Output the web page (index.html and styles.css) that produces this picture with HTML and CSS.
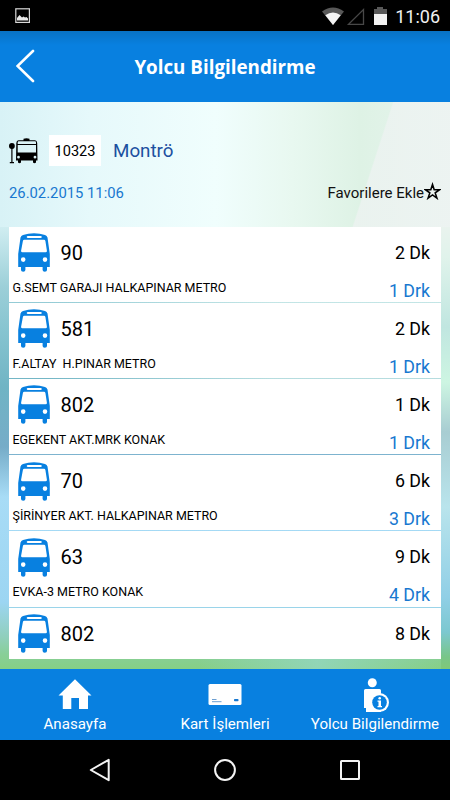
FILE: index.html
```
<!DOCTYPE html>
<html lang="tr">
<head>
<meta charset="utf-8">
<title>Yolcu Bilgilendirme</title>
<link rel="stylesheet" href="styles.css">
</head>
<body>
<svg class="defs" width="0" height="0">
  <symbol id="bus" viewBox="0 0 32 39">
    <path fill="#0880e0" fill-rule="evenodd" d="M2.500 4.500Q3 2.800 5 2Q10 .2 16 .2T27 2Q29 2.800 29.500 4.500L31.800 21V34H29V37Q29 38.800 26.800 38.800T24.600 37V34H7.400V37Q7.400 38.800 5.200 38.800T3 37V34H.2V21ZM10 2.900Q8.700 2.900 8.700 4T10 5.100H22.500Q23.800 5.100 23.800 4T22.500 2.900ZM6.300 6.700Q5.100 6.700 4.900 8L3.100 17.700Q2.900 19.200 4.400 19.200H27.600Q29.100 19.200 28.900 17.700L27.400 8Q27.200 6.700 26 6.700ZM5.200 24.300A2.300 2.300 0 1 0 5.200 28.900A2.300 2.300 0 1 0 5.200 24.300ZM27 24.300A2.300 2.300 0 1 0 27 28.900A2.300 2.300 0 1 0 27 24.300Z"/>
  </symbol>
</svg>
<div class="screen">
  <div class="status">
    <svg class="picture" width="16" height="16" viewBox="0 0 16 16"><rect x=".8" y=".8" width="13.600" height="13.600" fill="none" stroke="#d8d8d8" stroke-width="1.200"/><path d="M2 12.500V10L4.500 7L7 9.500L8.500 8.500L10 9.500L11.500 9L13 10.500V12.500Z" fill="#e8e8e8"/></svg>
    <svg class="signals" width="66" height="19" viewBox="0 0 66 19"><path d="M0 4.500Q11 -3.500 22 4.500L11 18Z" fill="#585858"/><path d="M3.300 8.300Q11 2.500 18.700 8.300L11 18Z" fill="#f4f4f4"/><path d="M26.500 17.300H41.500V2.500Z" fill="none" stroke="#484848" stroke-width="1.300"/><path d="M52 2H55V0H61V2H65V18H52Z" fill="#585858"/><path d="M52 7H65V18H52Z" fill="#f2f2f2"/></svg>
    <span class="clock">11:06</span>
  </div>
  <header class="header">
    <svg class="back" width="20" height="34" viewBox="0 0 20 34"><path d="M17 2L1.500 17L17 32" fill="none" stroke="#fff" stroke-width="2.600" stroke-linecap="round"/></svg>
    <h1>Yolcu Bilgilendirme</h1>
  </header>
  <main class="main">
    <div class="stop">
      <svg class="stop-icon" width="29" height="27" viewBox="0 0 29 27"><circle cx="2.900" cy="8" r="2.900"/><path d="M2.300 10H3.500V24H5V25.300H.8V24H2.300Z"/><path fill-rule="evenodd" d="M9.500 2.300H14.500V.8Q17.500 -.1 20.500 .8V2.300H26Q28 2.300 28.200 5L28.500 22.500H27V24.500Q25.500 26 24 24.500V22.500H12V24.500Q10.500 26 9 24.500V22.500H7L7.300 5Q7.500 2.300 9.500 2.300ZM9.700 3.300Q8.700 3.300 8.700 4.500V6H27V4.500Q27 3.300 26 3.300ZM8.700 7V14.500H27V7ZM9.500 17.800A1.400 1.400 0 1 0 9.500 20.600A1.400 1.400 0 1 0 9.500 17.800ZM26 17.800A1.400 1.400 0 1 0 26 20.600A1.400 1.400 0 1 0 26 17.800Z"/></svg>
      <span class="stop-code">10323</span>
      <span class="stop-name">Montrö</span>
    </div>
    <div class="meta">
      <span class="date">26.02.2015 11:06</span>
      <span class="favorite">Favorilere Ekle<svg width="17" height="18" viewBox="0 0 17 18"><path d="M8.500 2.500L10.200 7.700H15.600L11.200 10.900L12.900 16.100L8.500 12.900L4.100 16.100L5.800 10.900L1.400 7.700H6.800Z" fill="none" stroke="#000" stroke-width="1.600"/></svg></span>
    </div>
    <div class="list">
      <div class="row"><svg class="bus"><use href="#bus"/></svg><b class="line">90</b><span class="time">2 Dk</span><span class="route">G.SEMT GARAJI HALKAPINAR METRO</span><span class="stops">1 Drk</span></div>
      <div class="row"><svg class="bus"><use href="#bus"/></svg><b class="line">581</b><span class="time">2 Dk</span><span class="route">F.ALTAY  H.PINAR METRO</span><span class="stops">1 Drk</span></div>
      <div class="row"><svg class="bus"><use href="#bus"/></svg><b class="line">802</b><span class="time">1 Dk</span><span class="route">EGEKENT AKT.MRK KONAK</span><span class="stops">1 Drk</span></div>
      <div class="row"><svg class="bus"><use href="#bus"/></svg><b class="line">70</b><span class="time">6 Dk</span><span class="route">ŞİRİNYER AKT. HALKAPINAR METRO</span><span class="stops">3 Drk</span></div>
      <div class="row"><svg class="bus"><use href="#bus"/></svg><b class="line">63</b><span class="time">9 Dk</span><span class="route">EVKA-3 METRO KONAK</span><span class="stops">4 Drk</span></div>
      <div class="row last"><svg class="bus"><use href="#bus"/></svg><b class="line">802</b><span class="time">8 Dk</span></div>
    </div>
  </main>
  <nav class="tabs">
    <div class="tab"><svg width="34" height="36" viewBox="0 0 34 36"><path fill="#fff" d="M17 1.200L33.500 17.500H30V31H21V20H13.300V31H4.800V17.500H.5Z"/></svg><span>Anasayfa</span></div>
    <div class="tab"><svg width="34" height="36" viewBox="0 0 34 36"><rect x=".5" y="6" width="33" height="21" rx="1.500" fill="#fff"/><path d="M4 21.500H8.500M4 23.700H13.500" stroke="#5c94cc" stroke-width=".9"/><rect x="26" y="21" width="4.500" height="2.300" rx=".8" fill="#1878d0"/></svg><span>Kart İşlemleri</span></div>
    <div class="tab"><svg width="28" height="36" viewBox="0 0 28 36"><circle cx="11.300" cy="4.800" r="4.500" fill="#fff"/><path d="M4.500 11H18.500Q20 11 20 12.500V34H5V30H3V12.500Q3 11 4.500 11Z" fill="#fff"/><circle cx="18.500" cy="24.500" r="9.500" fill="#fff"/><circle cx="18.500" cy="24.500" r="7.300" fill="#0880e0"/><circle cx="18.700" cy="20.200" r="1.300" fill="#fff"/><path d="M16.500 22.500H20V28H21V29.300H16.500V28H17.500V23.700H16.500Z" fill="#fff"/></svg><span>Yolcu Bilgilendirme</span></div>
  </nav>
  <div class="system">
    <svg width="22" height="24" viewBox="0 0 22 24"><path d="M19.700 1.800V22.200L1.800 12Z" fill="none" stroke="#f4f4f4" stroke-width="2" stroke-linejoin="round"/></svg>
    <svg width="22" height="24" viewBox="0 0 22 24"><circle cx="11" cy="12" r="9.900" fill="none" stroke="#f4f4f4" stroke-width="2"/></svg>
    <svg width="22" height="24" viewBox="0 0 22 24"><rect x="2" y="3" width="18" height="18" rx=".5" fill="none" stroke="#f4f4f4" stroke-width="2"/></svg>
  </div>
</div>
</body>
</html>
```

FILE: styles.css
```
* { box-sizing: border-box; }
body { margin: 0; background: #000; font-family: Roboto, sans-serif; color: #000; }
svg { display: block; flex: none; }
.defs { position: absolute; }
.screen { width: 450px; height: 800px; display: flex; flex-direction: column; overflow: hidden; }

.status { height: 31px; display: flex; align-items: flex-start; background: #000; padding: 0 10px 0 15px; }
.picture { margin-top: 8px; }
.signals { margin: 7px 6px 0 auto; }
.clock { width: 46px; text-align: right; color: #f0f0f0; font-size: 18px; line-height: 33px; }

.header { height: 71px; display: flex; align-items: center; padding-left: 16px; background: linear-gradient(#0872c4, #0880e0 14px); }
.back { margin-bottom: 1px; }
.header h1 { flex: 1; margin: 0 36px 0 0; text-align: center; color: #fff; font: 700 18.800px/70px "Open Sans", sans-serif; }

.main {
  height: 567px;
  padding: 33px 9px 0;
  background:
    linear-gradient(108deg, transparent 80%, rgba(238, 243, 242, .75) 80.3%) 0 0 / 450px 125px no-repeat,
    linear-gradient(90deg, #d8f2f6, #e6f9fb 20%, #f0fefd 48%, #e8f8f0 65%, #def2e5 80%, #e8f4ef) 0 0 / 450px 125px no-repeat,
    linear-gradient(#e9f3ee, #e0f3eb 30px, #c0e6e0 100px, #cdf5e2 155px, #a8cdd2 205px, #b9e4ec 280px, #90cfe6 370px, #7cc8d0 405px, #78c688 430px, #80c878) 100% 125px / 9px 442px no-repeat,
    linear-gradient(90deg, transparent 45%, rgba(150, 216, 200, .7) 72%, transparent) 0 100% / 441px 10px no-repeat,
    linear-gradient(90deg, transparent 10%, rgba(225, 246, 240, .6) 60%) 0 0 / 450px 300px no-repeat,
    linear-gradient(#d4eff4, #d0edf1 125px, #9ccfd8 185px, #86c4d0 230px, #70b4c4 285px, #76acc8 345px, #a8dcf6 395px, #9cd5f2 500px, #90cfbc 535px, #88cf98 552px, #86cf85);
}
.stop { height: 31px; display: flex; align-items: center; }
.stop-icon { margin-top: 2px; }
.stop-code { width: 52px; height: 31px; margin-left: 11px; background: #fff; text-align: center; font-size: 14.600px; line-height: 33px; }
.stop-name { margin-left: 12px; color: #1c50a0; font-size: 18.800px; line-height: 33px; padding-top: 2px; }
.meta { height: 60.700px; padding-top: 16px; display: flex; justify-content: space-between; align-items: flex-start; font-size: 14.800px; line-height: 22px; }
.date { color: #1878d0; }
.favorite { display: flex; color: #111; font-size: 15px; line-height: 23px; }

.list { height: 432.500px; }
.row { height: 75.200px; margin-bottom: 1px; padding: 0 11px 0 3.500px; display: grid; grid-template-columns: 48px 1fr auto; grid-template-rows: 50px 25px; background: #fff; }
.row.last { height: 51.500px; margin: 0; }
.bus { width: 32px; height: 39px; margin: 6.300px 0 0 5.500px; }
.line { font-weight: 400; font-size: 20px; line-height: 53px; }
.time { text-align: right; font-size: 17.800px; line-height: 52px; }
.route { grid-column: 1 / 3; white-space: pre; font-size: 12.480px; line-height: 21px; }
.stops { text-align: right; color: #1878d0; font-size: 17.800px; line-height: 27.500px; }

.tabs { height: 71px; display: grid; grid-template-columns: repeat(3, 1fr); background: #0880e0; }
.tab { display: flex; flex-direction: column; align-items: center; padding-top: 9px; color: #fff; font-size: 15.100px; line-height: 20px; white-space: nowrap; }
.system { height: 60px; display: flex; justify-content: center; align-items: center; gap: 103px; background: #000; }
```
